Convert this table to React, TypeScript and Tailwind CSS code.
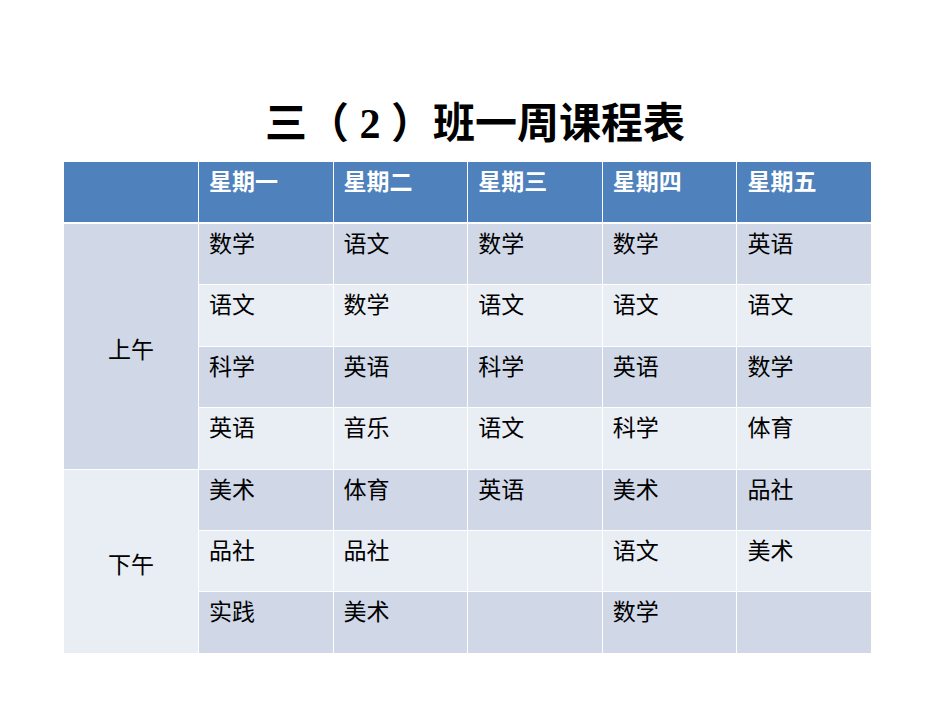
import React from 'react'

const days = ['星期一', '星期二', '星期三', '星期四', '星期五']

// 每行课程，空字符串表示没课
const rows: string[][] = [
  ['数学', '语文', '数学', '数学', '英语'],
  ['语文', '数学', '语文', '语文', '语文'],
  ['科学', '英语', '科学', '英语', '数学'],
  ['英语', '音乐', '语文', '科学', '体育'],
  ['美术', '体育', '英语', '美术', '品社'],
  ['品社', '品社', '', '语文', '美术'],
  ['实践', '美术', '', '数学', ''],
]

const font = { fontFamily: '"Liberation Serif", "Noto Sans CJK SC", serif' }

const App: React.FC = () => {
  return (
    <div className="w-[950px] h-[713px] bg-white flex flex-col" style={font}>
      <h1 className="mt-[96px] h-[56px] text-center text-[42px] leading-[56px] font-bold text-black">
        三（ 2 ）班一周课程表
      </h1>

      <div className="mt-[10px] ml-[64px] w-[807px] grid grid-cols-[134px_repeat(5,1fr)] grid-rows-[61px_repeat(7,60.4px)] gap-px bg-white">
        {/* 表头 */}
        <div className="bg-[#4f81bd] mb-px"></div>
        {days.map(d => (
          <div key={d} className="bg-[#4f81bd] mb-px pl-[10px] pt-[7px] text-white font-bold text-[23px] leading-[28px]">
            {d}
          </div>
        ))}

        {/* 上午 */}
        <div className="row-start-2 row-span-4 col-start-1 bg-[#d0d8e8] pt-[10px] flex items-center justify-center text-[23px] text-black">
          上午
        </div>
        {/* 下午 */}
        <div className="row-start-6 row-span-3 col-start-1 bg-[#e9edf4] pt-[10px] flex items-center justify-center text-[23px] text-black">
          下午
        </div>

        {rows.map((r, i) =>
          r.map((c, j) => (
            <div
              key={`${i}-${j}`}
              className={`${i % 2 === 0 ? 'bg-[#d0d8e8]' : 'bg-[#e9edf4]'} pl-[10px] pt-[7px] text-[23px] leading-[28px] text-black`}
              style={{ gridRow: i + 2, gridColumn: j + 2 }}
            >
              {c}
            </div>
          ))
        )}
      </div>
    </div>
  )
}

export default App
